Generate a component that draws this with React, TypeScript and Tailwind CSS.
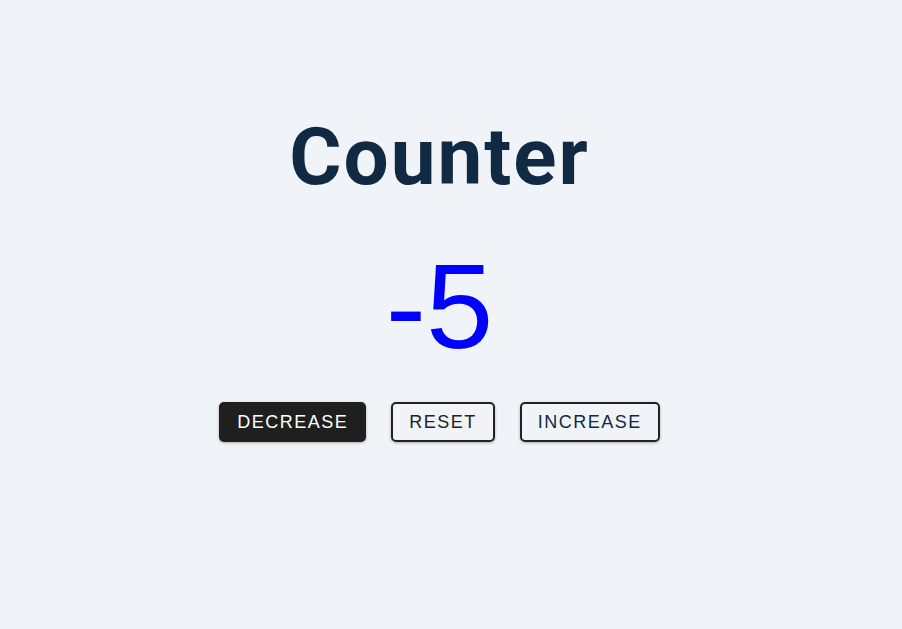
export default function App() {
  return (
    <div className="min-h-screen w-full bg-[#f0f4f8] flex flex-col items-center pt-[117px] pr-[23px]">
      <h1 className="font-['Roboto',sans-serif] font-bold text-[80px] leading-none text-[#102a43] tracking-[2px]">
        Counter
      </h1>
      <div className="mt-[49px] font-['Liberation_Sans',Arial,sans-serif] text-[121px] leading-none text-[#0000ff]">
        -5
      </div>
      <div className="mt-[35px] flex gap-[25px] font-['Liberation_Sans',Arial,sans-serif] text-[18px]">
        <button className="h-[40px] px-[16px] rounded-[5px] bg-[#1f1f1f] text-white uppercase tracking-[1.5px] border-2 border-[#1f1f1f] shadow-[0_1px_3px_rgba(0,0,0,0.3)]">
          Decrease
        </button>
        <button className="h-[40px] px-[16px] rounded-[5px] bg-transparent text-[#222] uppercase tracking-[1.5px] border-2 border-[#222] shadow-[0_1px_3px_rgba(0,0,0,0.3)]">
          Reset
        </button>
        <button className="h-[40px] px-[16px] rounded-[5px] bg-transparent text-[#102a43] uppercase tracking-[1.5px] border-2 border-[#222] shadow-[0_1px_3px_rgba(0,0,0,0.3)]">
          Increase
        </button>
      </div>
    </div>
  );
}
